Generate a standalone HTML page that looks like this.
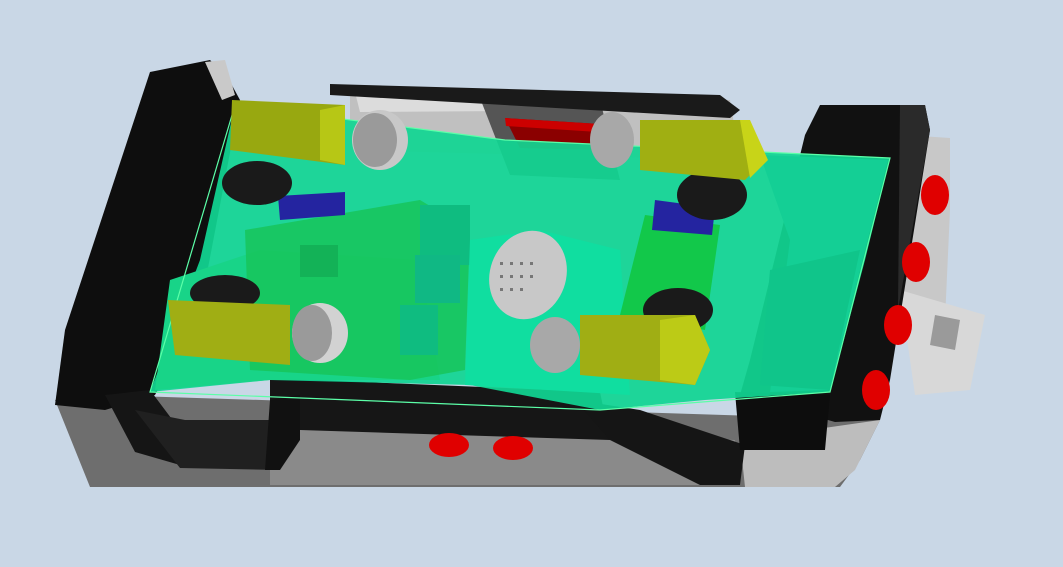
<!DOCTYPE html>
<html><head><meta charset="utf-8"><style>
html,body{margin:0;padding:0;background:#c9d7e6;}
svg{display:block}
</style></head><body>
<svg width="1063" height="567" viewBox="0 0 1063 567" xmlns="http://www.w3.org/2000/svg">
<rect width="1063" height="567" fill="#c9d7e6"/>
<!-- right gray bracket -->
<polygon points="905,135 950,138 950,210 945,320 900,330" fill="#c8c8c8"/>
<polygon points="900,290 985,315 970,390 915,395" fill="#d8d8d8"/>
<polygon points="935,315 960,320 955,350 930,345" fill="#9a9a9a"/>
<!-- base gray -->
<polygon points="55,400 105,395 880,420 860,460 840,487 90,487" fill="#6e6e6e"/>
<polygon points="270,420 735,440 740,485 270,485" fill="#8a8a8a"/>
<polygon points="740,440 880,420 855,470 835,487 745,487" fill="#bdbdbd"/>
<!-- black band under plate -->
<polygon points="270,378 600,392 610,440 300,430 270,420" fill="#161616"/>
<!-- top gray rail -->
<polygon points="350,88 730,100 740,160 350,150" fill="#c0c0c0"/>
<polygon points="355,92 640,98 650,110 360,112" fill="#dcdcdc"/>
<polygon points="480,98 600,100 620,180 510,175" fill="#555"/>
<polygon points="505,118 600,124 605,150 520,148" fill="#8b0000"/>
<polygon points="505,118 600,124 598,132 506,126" fill="#cc0000"/>
<!-- left black -->
<polygon points="150,72 210,60 228,78 240,100 200,310 155,395 105,410 55,405 65,330" fill="#0e0e0e"/>
<polygon points="205,62 225,60 235,95 222,100" fill="#c9c9c9"/>
<polygon points="105,395 150,390 180,430 180,465 135,452" fill="#151515"/>
<polygon points="135,410 185,420 275,420 280,470 180,468" fill="#202020"/>
<!-- top black -->
<polygon points="330,84 720,95 740,110 730,118 330,95" fill="#1a1a1a"/>
<!-- right black -->
<polygon points="820,105 925,105 930,130 890,380 880,420 835,422 740,395 750,360 805,135" fill="#111"/>
<polygon points="900,105 925,105 930,130 898,310" fill="#2a2a2a"/>
<!-- bottom black blocks -->
<polygon points="270,400 300,395 300,440 280,470 265,470" fill="#111"/>
<polygon points="575,400 640,410 745,445 740,485 700,485 610,440" fill="#151515"/>
<polygon points="735,392 830,395 825,450 740,450" fill="#0d0d0d"/>
<!-- green plate -->
<polygon points="235,105 505,140 890,158 865,260 830,392 705,400 600,410 470,385 270,380 150,392 200,260" fill="#11d592" fill-opacity="0.93"/>
<polygon points="170,280 260,250 420,260 440,380 270,380 155,390" fill="#18d488"/>
<polygon points="760,155 888,160 862,262 830,390 770,392 790,240" fill="#14cf95"/>
<polygon points="770,270 860,250 830,390 760,385" fill="#10c58a"/>
<polyline points="235,105 505,140 890,158 830,392 600,410 150,392 235,105" fill="none" stroke="#5cffa8" stroke-width="1.2"/>
<!-- raspberry pi -->
<polygon points="245,230 420,200 470,230 465,370 410,380 250,370" fill="#17c45a" fill-opacity="0.85"/>
<rect x="300" y="245" width="38" height="32" fill="#13b257"/>
<rect x="420" y="205" width="50" height="60" fill="#0fbc80"/>
<rect x="400" y="305" width="38" height="50" fill="#0fbc80"/>
<rect x="415" y="255" width="45" height="48" fill="#10b884"/>
<!-- breadboard -->
<polygon points="470,240 540,230 620,250 630,395 465,385" fill="#10dea0"/>
<ellipse cx="528" cy="275" rx="38" ry="45" fill="#c8c8c8" transform="rotate(20 528 275)"/>
<g fill="#777">
<rect x="500" y="262" width="3" height="3"/><rect x="510" y="262" width="3" height="3"/><rect x="520" y="262" width="3" height="3"/><rect x="530" y="262" width="3" height="3"/>
<rect x="500" y="275" width="3" height="3"/><rect x="510" y="275" width="3" height="3"/><rect x="520" y="275" width="3" height="3"/><rect x="530" y="275" width="3" height="3"/>
<rect x="500" y="288" width="3" height="3"/><rect x="510" y="288" width="3" height="3"/><rect x="520" y="288" width="3" height="3"/>
</g>
<!-- batteries -->
<polygon points="645,215 720,225 705,330 620,315" fill="#12c84a"/>
<!-- modules blue -->
<polygon points="278,196 345,192 345,215 280,220" fill="#2424a0"/>
<polygon points="655,200 715,208 712,235 652,230" fill="#2424a0"/>
<!-- wheels -->
<ellipse cx="257" cy="183" rx="35" ry="22" fill="#1a1a1a"/>
<ellipse cx="712" cy="195" rx="35" ry="25" fill="#1a1a1a"/>
<ellipse cx="225" cy="293" rx="35" ry="18" fill="#1a1a1a"/>
<ellipse cx="678" cy="310" rx="35" ry="22" fill="#1a1a1a"/>
<!-- motors -->
<polygon points="232,100 345,105 345,165 230,150" fill="#98a810"/>
<polygon points="320,110 345,105 345,165 320,160" fill="#b7c715"/>
<ellipse cx="380" cy="140" rx="28" ry="30" fill="#c8c8c8"/>
<ellipse cx="375" cy="140" rx="22" ry="27" fill="#9a9a9a"/>
<polygon points="640,120 745,120 765,160 745,180 640,170" fill="#a0af12"/>
<polygon points="740,120 750,120 768,160 750,178" fill="#c8d418"/>
<ellipse cx="612" cy="140" rx="22" ry="28" fill="#a8a8a8"/>
<polygon points="168,300 290,305 290,365 175,355" fill="#a0ae14"/>
<ellipse cx="320" cy="333" rx="28" ry="30" fill="#d2d2d2"/>
<ellipse cx="312" cy="333" rx="20" ry="28" fill="#9a9a9a"/>
<polygon points="580,315 695,315 710,350 695,385 580,375" fill="#a0ae14"/>
<polygon points="660,320 695,315 710,350 695,385 660,380" fill="#bccb16"/>
<ellipse cx="555" cy="345" rx="25" ry="28" fill="#a8a8a8"/>
<!-- red buttons -->
<g fill="#e00000">
<ellipse cx="935" cy="195" rx="14" ry="20"/><ellipse cx="916" cy="262" rx="14" ry="20"/>
<ellipse cx="898" cy="325" rx="14" ry="20"/><ellipse cx="876" cy="390" rx="14" ry="20"/>
<ellipse cx="449" cy="445" rx="20" ry="12"/><ellipse cx="513" cy="448" rx="20" ry="12"/>
</g>
</svg>
</body></html>
